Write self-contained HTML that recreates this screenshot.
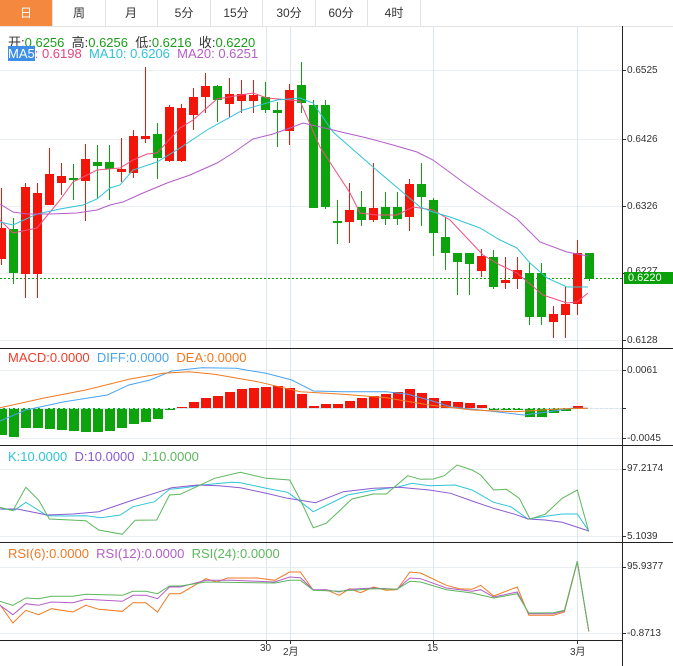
<!DOCTYPE html>
<html><head><meta charset="utf-8"><style>
html,body{margin:0;padding:0;background:#fff;}
body{width:673px;height:666px;position:relative;overflow:hidden;font-family:"Liberation Sans","Noto Sans CJK SC",sans-serif;}
.tabs{position:absolute;left:0;top:0;width:673px;height:26px;border-bottom:1px solid #e3e3e3;}
.tab{position:absolute;top:0;height:26px;width:52px;border-right:1px solid #e3e3e3;text-align:center;line-height:26px;font-size:12px;color:#333;}
.tab.on{background:#f5883f;color:#fff;}
.t{position:absolute;font-size:13px;white-space:nowrap;}
svg{position:absolute;left:0;top:0;}
</style></head><body>
<div class="tabs">
<div class="tab on" style="left:0">日</div>
<div class="tab" style="left:53px">周</div>
<div class="tab" style="left:105px">月</div>
<div class="tab" style="left:158px">5分</div>
<div class="tab" style="left:210px">15分</div>
<div class="tab" style="left:263px">30分</div>
<div class="tab" style="left:315px">60分</div>
<div class="tab" style="left:368px">4时</div>
</div>
<svg id="s" width="673" height="666" xmlns="http://www.w3.org/2000/svg"></svg>
<div class="t" style="left:8px;top:32px;color:#333">开:<span style="color:#1a9e1a">0.6256</span>&nbsp; 高:<span style="color:#1a9e1a">0.6256</span>&nbsp; 低:<span style="color:#1a9e1a">0.6216</span>&nbsp; 收:<span style="color:#1a9e1a">0.6220</span></div>
<div class="t" style="left:8px;top:46px"><span style="background:#3d8ee6;color:#fff">MA5</span><span style="color:#e8457a">: 0.6198</span>&nbsp; <span style="color:#2ec5d8">MA10: 0.6206</span>&nbsp; <span style="color:#b45dc9">MA20: 0.6251</span></div>
<div class="t" style="left:8px;top:350px"><span style="color:#f03c2a">MACD:0.0000</span>&nbsp; <span style="color:#4aa3ef">DIFF:0.0000</span>&nbsp; <span style="color:#f07a22">DEA:0.0000</span></div>
<div class="t" style="left:8px;top:449px"><span style="color:#2ec5d8">K:10.0000</span>&nbsp; <span style="color:#8a5bd0">D:10.0000</span>&nbsp; <span style="color:#5cb85c">J:10.0000</span></div>
<div class="t" style="left:8px;top:546px"><span style="color:#f07a22">RSI(6):0.0000</span>&nbsp; <span style="color:#b45dc9">RSI(12):0.0000</span>&nbsp; <span style="color:#5cb85c">RSI(24):0.0000</span></div>
<div class="t" style="left:627px;top:65px;font-size:10px;color:#333">0.6525</div>
<div class="t" style="left:627px;top:134px;font-size:10px;color:#333">0.6426</div>
<div class="t" style="left:627px;top:201px;font-size:10px;color:#333">0.6326</div>
<div class="t" style="left:627px;top:266px;font-size:10px;color:#333">0.6227</div>
<div class="t" style="left:624px;top:272px;width:49px;height:12px;background:#0aa00a;color:#fff;font-size:11px;line-height:12px;padding-left:4px;box-sizing:border-box">0.6220</div>
<div class="t" style="left:627px;top:335px;font-size:10px;color:#333">0.6128</div>
<div class="t" style="left:627px;top:365px;font-size:10px;color:#333">0.0061</div>
<div class="t" style="left:627px;top:433px;font-size:10px;color:#333">-0.0045</div>
<div class="t" style="left:627px;top:463px;font-size:10px;color:#333">97.2174</div>
<div class="t" style="left:627px;top:531px;font-size:10px;color:#333">5.1039</div>
<div class="t" style="left:627px;top:561px;font-size:10px;color:#333">95.9377</div>
<div class="t" style="left:627px;top:628px;font-size:10px;color:#333">-0.8713</div>
<div class="t" style="left:260px;top:643px;font-size:10px;color:#333">30</div>
<div class="t" style="left:283px;top:643px;font-size:10px;color:#333">2月</div>
<div class="t" style="left:427px;top:643px;font-size:10px;color:#333">15</div>
<div class="t" style="left:570px;top:643px;font-size:10px;color:#333">3月</div>
<script>
var s=document.getElementById('s'),h='';
function L(x1,y1,x2,y2,c,w,d){h+='<line x1="'+x1+'" y1="'+y1+'" x2="'+x2+'" y2="'+y2+'" stroke="'+c+'" stroke-width="'+(w||1)+'"'+(d?' stroke-dasharray="'+d+'"':'')+'/>';}
function P(pts,c,sx,ox,sy,oy){var a=[];for(var i=0;i<pts.length;i+=2)a.push((pts[i]*sx+ox).toFixed(1)+','+(pts[i+1]*sy+oy).toFixed(1));h+='<polyline fill="none" stroke="'+c+'" stroke-width="1" points="'+a.join(' ')+'"/>';}
var G='#e9eef3';
[70,139,206,273,340,370,408,438,469,536,567,633].forEach(function(y){L(0,y+.5,622,y+.5,G);L(622,y+.5,626,y+.5,'#333');});
[266,290,433,577].forEach(function(x){L(x+.5,26,x+.5,640,'#dde7ef');});
L(622.5,26,622.5,666,'#222');
[348,445,542].forEach(function(y){L(0,y+.5,673,y+.5,'#222');});
L(0,640.5,622,640.5,'#222');
L(0,278.5,622,278.5,'#0aa00a',1,'2,2');
var R='#f2160a',Gr='#0ca30c';
var c=[[1,'r',228,259,188,265],[13,'g',229,273,218,284],[25,'r',187,274,183,298],[37,'r',193,274,183,298],[49,'r',174,205,148,205],[61,'r',176,183,163,195],[73,'g',178,180,164,200],[85,'r',159,181,144,221],[97,'g',162,166,145,198],[109,'g',162,169,145,200],[121,'r',169,172,138,182],[133,'r',136,173,130,178],[145,'r',136,139,67,143],[157,'g',134,158,123,179],[169,'r',107,161,105,162],[181,'r',108,161,104,162],[193,'r',97,115,88,130],[205,'r',86,97,73,113],[217,'g',86,100,85,122],[229,'r',94,104,78,117],[241,'r',94,101,80,113],[253,'r',95,101,80,113],[265,'g',97,110,82,113],[277,'g',110,113,102,147],[289,'r',90,131,84,145],[301,'g',85,103,62,113],[313,'g',105,208,100,208],[325,'g',105,207,100,209],[337,'g',221,223,200,244],[349,'r',210,222,183,243],[361,'g',207,220,191,226],[373,'r',208,220,163,222],[385,'g',207,219,192,225],[397,'g',207,219,192,225],[409,'r',184,217,179,231],[421,'g',184,197,163,226],[433,'g',200,233,198,256],[445,'g',237,253,217,270],[457,'g',253,262,253,295],[469,'g',253,264,253,295],[481,'r',256,271,249,277],[493,'g',257,287,250,289],[505,'r',280,283,257,289],[517,'r',270,279,257,289],[529,'g',273,317,263,325],[541,'g',273,317,263,325],[553,'r',314,322,306,338],[565,'r',304,315,287,338],[577,'r',253,304,240,315],[589,'g',253,279,253,281]];
c.forEach(function(k){var col=k[1]=='r'?R:Gr;L(k[0]+.5,k[4],k[0]+.5,k[5],col);h+='<rect x="'+(k[0]-4)+'" y="'+k[2]+'" width="9" height="'+Math.max(2,k[3]-k[2])+'" fill="'+col+'"/>';});
P([0,220,13,233,37,228,60,200,73,182,97,170,120,168,133,160,147,154,157,153,180,128,193,120,217,99,253,93,267,98,300,101,320,147,350,193,360,213,377,215,397,215,413,207,433,210,450,220,483,255,500,265,517,273,543,295,567,303,577,302,588,293],'#ef4f82',1,0,1,0);
P([0,222,13,225,37,214,60,209,83,205,97,199,110,188,120,185,133,170,157,162,180,148,207,130,243,110,277,100,300,98,313,103,333,132,373,167,400,190,420,207,433,212,450,217,480,228,500,240,517,248,530,263,547,278,567,287,588,287],'#2ec5d8',1,0,1,0);
P([0,204,13,212,27,214,50,214,77,213,97,210,110,205,123,202,143,193,167,183,190,175,217,163,233,153,253,139,273,134,290,128,303,123,333,130,367,138,393,145,417,152,433,160,467,185,493,203,517,219,540,242,567,252,588,256],'#b45dc9',1,0,1,0);
var m=[435,437,428,428,429,430,431,432,432,431,428,424,422,419,410,407,402,398,396,392,389,388,387,386,388,394,406,404,404,401,398,396,394,392,389,393,398,401,402,403,405,410,410,410,417,417,413,411,406];
m.forEach(function(v,i){var x=1+12*i-4,z=408;var col=v>z?Gr:R;var y=Math.min(v,z),hh=Math.max(1,Math.abs(v-z));h+='<rect x="'+x+'" y="'+y+'" width="10" height="'+hh+'" fill="'+col+'"/>';});
L(0,408.5,622,408.5,'#cfe6f2',1,'3,2');
var sx=1/2.33;
P([0,228,60,195,150,170,250,150,300,120,350,105,400,78,470,68,550,70,620,85,680,105,730,138,800,140,900,140,950,148,1000,165,1050,185,1140,198,1220,210,1280,200,1330,190,1370,190],'#4aa3ef',sx,0,1/3,345);
P([0,188,100,160,200,135,300,103,380,85,440,80,500,88,600,110,700,140,800,148,900,158,1000,180,1100,195,1200,200,1300,192,1370,190],'#f07a22',sx,0,1/3,345);
P([0,192,35,195,60,172,110,212,150,213,200,212,235,218,280,210,310,185,360,170,395,133,430,128,470,120,540,112,560,113,620,130,670,142,700,170,730,200,810,150,860,138,930,125,960,115,1000,122,1060,120,1100,135,1150,172,1190,185,1230,222,1280,212,1310,207,1345,207,1372,258],'#2ec5d8',sx,0,1/3,445);
P([0,192,40,192,110,210,170,207,230,200,310,165,360,145,400,128,460,120,510,122,560,128,620,145,670,160,735,173,800,140,870,130,930,127,1000,135,1050,145,1100,168,1150,190,1200,208,1230,222,1270,225,1310,232,1372,258],'#8a5bd0',sx,0,1/3,445);
P([0,187,30,197,60,127,90,165,115,222,200,227,230,255,285,268,315,226,365,225,395,150,420,148,500,100,560,82,620,100,675,105,700,165,730,248,760,235,820,162,870,147,900,147,950,92,980,103,1010,102,1035,92,1065,60,1100,75,1120,90,1150,135,1180,133,1210,160,1235,222,1270,208,1310,160,1345,135,1372,260],'#5cb85c',sx,0,1/3,445);
P([0,188,30,243,60,205,90,218,120,200,170,210,200,190,230,202,285,208,310,182,340,182,367,210,395,155,420,155,480,110,505,120,530,108,600,108,640,115,675,90,700,90,730,145,760,143,790,160,815,140,840,152,870,135,900,145,925,143,955,90,980,93,1040,130,1070,140,1100,142,1120,130,1150,162,1205,135,1232,220,1290,220,1315,210,1345,60,1372,268],'#f07a22',sx,0,1/3,542);
P([0,190,30,218,60,185,90,190,120,180,170,182,200,172,285,178,310,160,340,160,367,170,395,135,420,135,480,115,540,115,640,120,675,105,700,107,730,143,760,143,790,150,815,142,870,138,925,142,955,108,980,110,1040,138,1100,148,1120,143,1150,165,1205,150,1232,215,1290,215,1315,207,1345,58,1372,268],'#b45dc9',sx,0,1/3,542);
P([0,178,30,190,60,168,90,170,120,163,170,163,200,157,285,160,310,148,340,148,367,155,395,132,420,132,480,120,640,123,675,115,700,115,730,145,790,148,870,140,925,142,955,118,980,120,1040,143,1100,153,1150,168,1205,155,1232,213,1290,212,1315,205,1345,58,1372,268],'#5cb85c',sx,0,1/3,542);
[266,290,433,577].forEach(function(x){L(x+.5,640,x+.5,644,'#333');});
s.innerHTML=h;
</script>
</body></html>
